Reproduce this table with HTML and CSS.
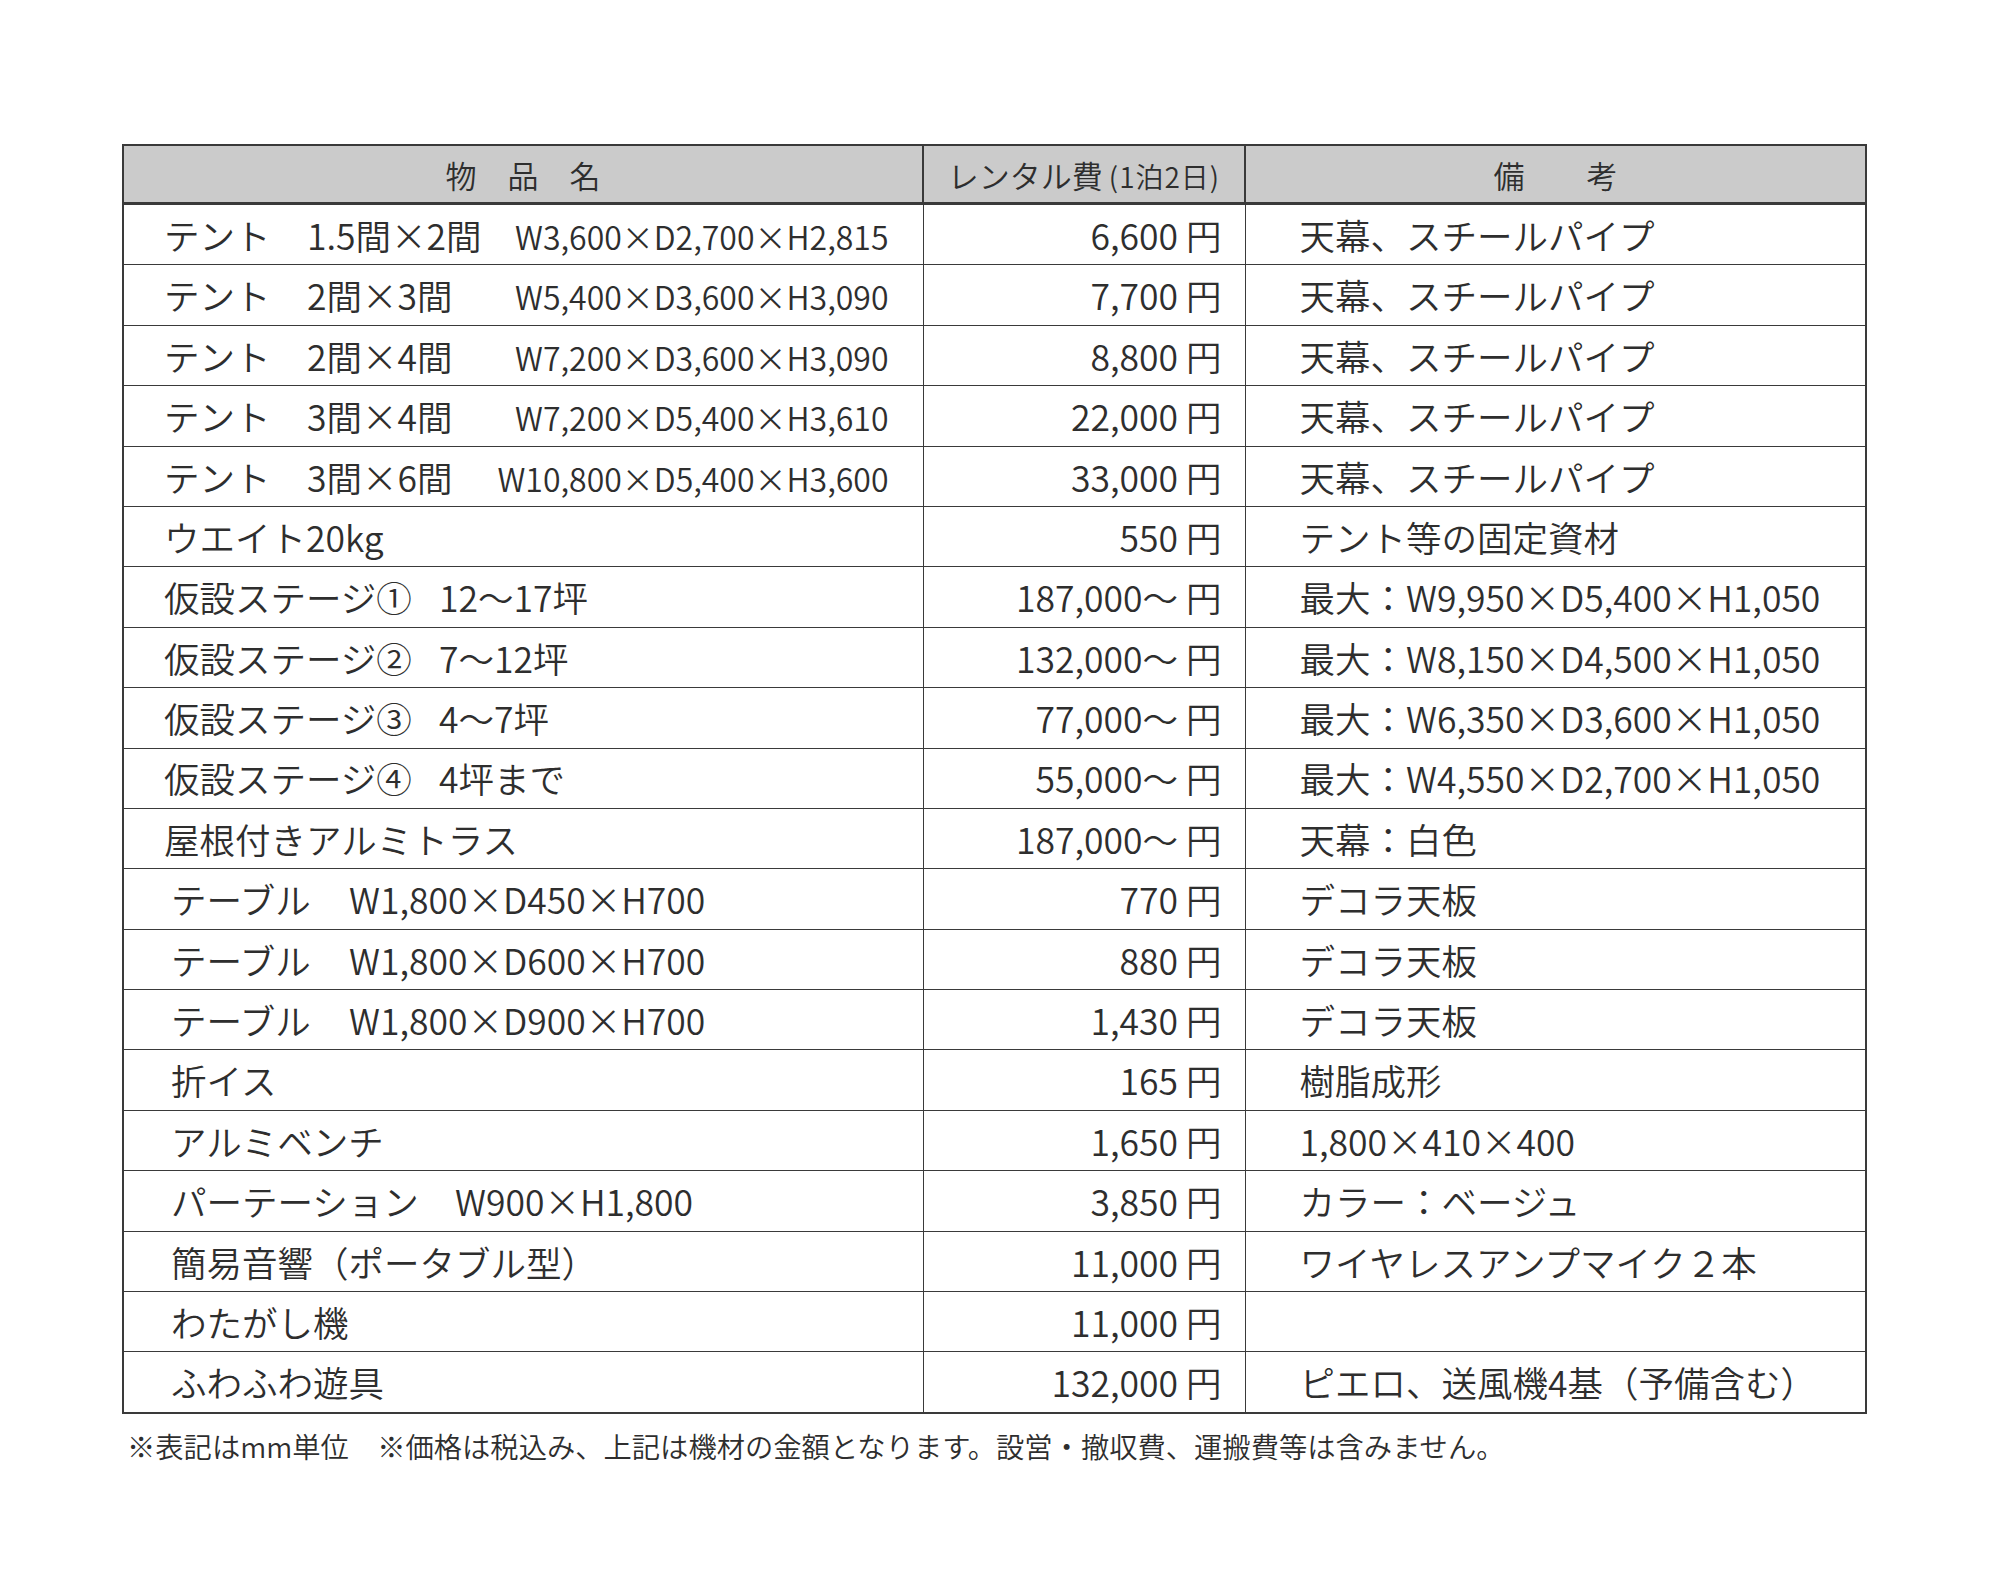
FILE: index.html
```html
<!DOCTYPE html>
<html lang="ja">
<head>
<meta charset="utf-8">
<title>レンタル品一覧</title>
<link rel="stylesheet" href="styles.css">
</head>
<body>
<main class="page">
  <table class="rental">
    <colgroup>
      <col class="c-name">
      <col class="c-price">
      <col class="c-note">
    </colgroup>
    <thead>
      <tr>
        <th class="h-name">物　品　名</th>
        <th class="h-price">レンタル費<span class="sub">(1泊2日)</span></th>
        <th class="h-note">備　　考</th>
      </tr>
    </thead>
    <tbody>
      <tr>
        <td class="name"><div class="line tent"><span class="k">テント</span><span class="size">1.5間×2間</span><span class="dim">W3,600×D2,700×H2,815</span></div></td>
        <td class="price">6,600 円</td>
        <td class="note">天幕、スチールパイプ</td>
      </tr>
      <tr>
        <td class="name"><div class="line tent"><span class="k">テント</span><span class="size">2間×3間</span><span class="dim">W5,400×D3,600×H3,090</span></div></td>
        <td class="price">7,700 円</td>
        <td class="note">天幕、スチールパイプ</td>
      </tr>
      <tr>
        <td class="name"><div class="line tent"><span class="k">テント</span><span class="size">2間×4間</span><span class="dim">W7,200×D3,600×H3,090</span></div></td>
        <td class="price">8,800 円</td>
        <td class="note">天幕、スチールパイプ</td>
      </tr>
      <tr>
        <td class="name"><div class="line tent"><span class="k">テント</span><span class="size">3間×4間</span><span class="dim">W7,200×D5,400×H3,610</span></div></td>
        <td class="price">22,000 円</td>
        <td class="note">天幕、スチールパイプ</td>
      </tr>
      <tr>
        <td class="name"><div class="line tent"><span class="k">テント</span><span class="size">3間×6間</span><span class="dim">W10,800×D5,400×H3,600</span></div></td>
        <td class="price">33,000 円</td>
        <td class="note">天幕、スチールパイプ</td>
      </tr>
      <tr>
        <td class="name">ウエイト20kg</td>
        <td class="price">550 円</td>
        <td class="note">テント等の固定資材</td>
      </tr>
      <tr>
        <td class="name"><div class="line"><span class="k stage">仮設ステージ①</span><span>12〜17坪</span></div></td>
        <td class="price">187,000〜 円</td>
        <td class="note">最大：W9,950×D5,400×H1,050</td>
      </tr>
      <tr>
        <td class="name"><div class="line"><span class="k stage">仮設ステージ②</span><span>7〜12坪</span></div></td>
        <td class="price">132,000〜 円</td>
        <td class="note">最大：W8,150×D4,500×H1,050</td>
      </tr>
      <tr>
        <td class="name"><div class="line"><span class="k stage">仮設ステージ③</span><span>4〜7坪</span></div></td>
        <td class="price">77,000〜 円</td>
        <td class="note">最大：W6,350×D3,600×H1,050</td>
      </tr>
      <tr>
        <td class="name"><div class="line"><span class="k stage">仮設ステージ④</span><span>4坪まで</span></div></td>
        <td class="price">55,000〜 円</td>
        <td class="note">最大：W4,550×D2,700×H1,050</td>
      </tr>
      <tr>
        <td class="name">屋根付きアルミトラス</td>
        <td class="price">187,000〜 円</td>
        <td class="note">天幕：白色</td>
      </tr>
      <tr>
        <td class="name in"><div class="line"><span class="k table-k">テーブル</span><span>W1,800×D450×H700</span></div></td>
        <td class="price">770 円</td>
        <td class="note">デコラ天板</td>
      </tr>
      <tr>
        <td class="name in"><div class="line"><span class="k table-k">テーブル</span><span>W1,800×D600×H700</span></div></td>
        <td class="price">880 円</td>
        <td class="note">デコラ天板</td>
      </tr>
      <tr>
        <td class="name in"><div class="line"><span class="k table-k">テーブル</span><span>W1,800×D900×H700</span></div></td>
        <td class="price">1,430 円</td>
        <td class="note">デコラ天板</td>
      </tr>
      <tr>
        <td class="name in">折イス</td>
        <td class="price">165 円</td>
        <td class="note">樹脂成形</td>
      </tr>
      <tr>
        <td class="name in">アルミベンチ</td>
        <td class="price">1,650 円</td>
        <td class="note">1,800×410×400</td>
      </tr>
      <tr>
        <td class="name in"><div class="line"><span class="k part-k">パーテーション</span><span>W900×H1,800</span></div></td>
        <td class="price">3,850 円</td>
        <td class="note">カラー：ベージュ</td>
      </tr>
      <tr>
        <td class="name in">簡易音響（ポータブル型）</td>
        <td class="price">11,000 円</td>
        <td class="note">ワイヤレスアンプマイク２本</td>
      </tr>
      <tr>
        <td class="name in">わたがし機</td>
        <td class="price">11,000 円</td>
        <td class="note"></td>
      </tr>
      <tr>
        <td class="name in">ふわふわ遊具</td>
        <td class="price">132,000 円</td>
        <td class="note">ピエロ、送風機4基（予備含む）</td>
      </tr>
    </tbody>
  </table>
  <p class="footnote">※表記はmm単位　※価格は税込み、上記は機材の金額となります。設営・撤収費、運搬費等は含みません。</p>
</main>
</body>
</html>
```
FILE: styles.css
```css
html, body {
  margin: 0;
  padding: 0;
  background: #ffffff;
}

body {
  font-family: "Noto Sans CJK JP", "Noto Sans", sans-serif;
  color: #2e2e2e;
  font-weight: 350;
}

.page {
  padding: 144px 0 0 122px;
}

.rental {
  width: 1743px;
  border-collapse: collapse;
  table-layout: fixed;
  border: 2px solid #3a3a3a;
}

.c-name { width: 800px; }
.c-price { width: 322px; }
.c-note { width: 621px; }

.rental th {
  background: #cbcbcb;
  height: 56px;
  padding: 0;
  font-weight: 350;
  font-size: 31px;
  text-align: center;
  border: 2px solid #3a3a3a;
  border-bottom-width: 3px;
  line-height: 1;
}

.rental th .sub {
  font-size: 28px;
  margin-left: 6px;
  letter-spacing: 1px;
}

.rental td {
  height: 59.4px;
  padding: 0;
  border: 1.5px solid #3a3a3a;
  font-size: 35.5px;
  line-height: 1;
  white-space: nowrap;
  vertical-align: middle;
}

.rental td.name {
  padding-left: 40px;
}

.rental td.name.in {
  padding-left: 47px;
}

.line {
  display: flex;
  align-items: baseline;
}

.line.tent {
  padding-right: 34px;
}

.line .k {
  flex: none;
}

.tent .k {
  width: 143px;
}

.tent .size {
  flex: 1;
}

.tent .dim {
  font-size: 32px;
}

.k.stage {
  width: 275px;
}

.k.table-k {
  width: 178px;
}

.k.part-k {
  width: 284px;
}

.rental td.price {
  text-align: right;
  padding-right: 23px;
}

.rental td.note {
  padding-left: 54px;
}

.footnote {
  margin: 13px 0 0 5px;
  font-size: 28.3px;
  line-height: 38px;
}
```
